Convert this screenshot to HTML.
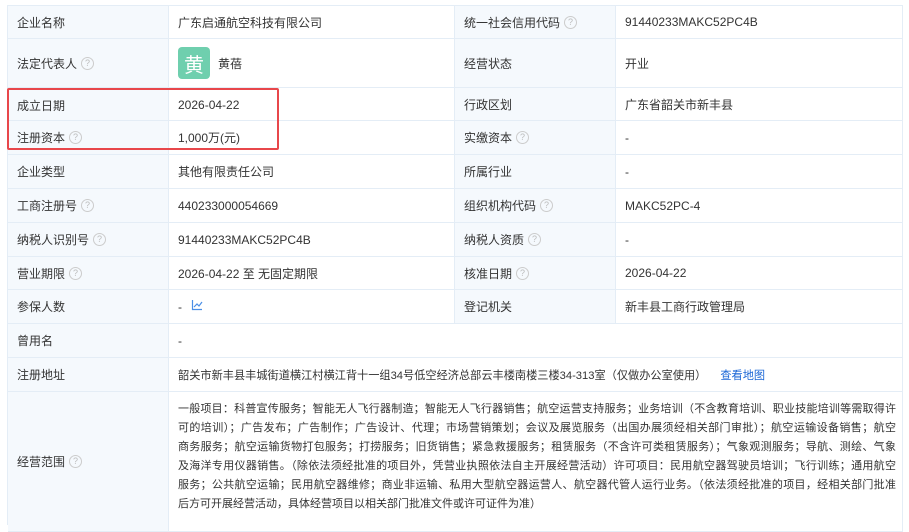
<!DOCTYPE html>
<html><head><meta charset="utf-8"><style>
body{margin:0;background:#fff;width:909px;height:515px;overflow:hidden;font-family:"Liberation Sans","Noto Sans CJK SC",sans-serif;font-size:12px;color:#333;position:relative}
.c{position:absolute;box-sizing:border-box;border-right:1px solid #e4edf6;border-bottom:1px solid #e4edf6;display:flex;align-items:center;padding-left:9px}
.l{background:#f5f9fd}
.q{display:inline-block;width:11px;height:11px;border:1px solid #ccc;border-radius:50%;color:#bbb;font-size:9px;line-height:11px;text-align:center;margin-left:4px}
.av{width:32px;height:32px;border-radius:4px;background:#6fcfae;color:#fff;font-size:20px;display:flex;align-items:center;justify-content:center;margin-right:8px}
.sc div{white-space:nowrap;overflow:hidden;text-align:justify;text-align-last:justify;width:718px;height:19px;line-height:19px;font-size:11px}
.sc div.last{text-align-last:left}
</style></head><body>
<div style="position:absolute;left:7px;top:5px;width:896px;height:1px;background:#e4edf6"></div>
<div style="position:absolute;left:7px;top:5px;width:1px;height:520px;background:#e4edf6"></div>

<div class="c l" style="left:8px;top:6px;width:161px;height:33px">企业名称</div>
<div class="c" style="left:169px;top:6px;width:286px;height:33px">广东启通航空科技有限公司</div>
<div class="c l" style="left:455px;top:6px;width:161px;height:33px">统一社会信用代码<span class="q">?</span></div>
<div class="c" style="left:616px;top:6px;width:287px;height:33px">91440233MAKC52PC4B</div>

<div class="c l" style="left:8px;top:39px;width:161px;height:49px">法定代表人<span class="q">?</span></div>
<div class="c" style="left:169px;top:39px;width:286px;height:49px"><div class="av">黄</div>黄蓓</div>
<div class="c l" style="left:455px;top:39px;width:161px;height:49px">经营状态</div>
<div class="c" style="left:616px;top:39px;width:287px;height:49px">开业</div>

<div class="c l" style="left:8px;top:88px;width:161px;height:33px;padding-top:2px">成立日期</div>
<div class="c" style="left:169px;top:88px;width:286px;height:33px;padding-top:2px">2026-04-22</div>
<div class="c l" style="left:455px;top:88px;width:161px;height:33px">行政区划</div>
<div class="c" style="left:616px;top:88px;width:287px;height:33px">广东省韶关市新丰县</div>

<div class="c l" style="left:8px;top:121px;width:161px;height:34px">注册资本<span class="q">?</span></div>
<div class="c" style="left:169px;top:121px;width:286px;height:34px">1,000万(元)</div>
<div class="c l" style="left:455px;top:121px;width:161px;height:34px">实缴资本<span class="q">?</span></div>
<div class="c" style="left:616px;top:121px;width:287px;height:34px">-</div>

<div class="c l" style="left:8px;top:155px;width:161px;height:34px">企业类型</div>
<div class="c" style="left:169px;top:155px;width:286px;height:34px">其他有限责任公司</div>
<div class="c l" style="left:455px;top:155px;width:161px;height:34px">所属行业</div>
<div class="c" style="left:616px;top:155px;width:287px;height:34px">-</div>

<div class="c l" style="left:8px;top:189px;width:161px;height:34px">工商注册号<span class="q">?</span></div>
<div class="c" style="left:169px;top:189px;width:286px;height:34px">440233000054669</div>
<div class="c l" style="left:455px;top:189px;width:161px;height:34px">组织机构代码<span class="q">?</span></div>
<div class="c" style="left:616px;top:189px;width:287px;height:34px">MAKC52PC-4</div>

<div class="c l" style="left:8px;top:223px;width:161px;height:34px">纳税人识别号<span class="q">?</span></div>
<div class="c" style="left:169px;top:223px;width:286px;height:34px">91440233MAKC52PC4B</div>
<div class="c l" style="left:455px;top:223px;width:161px;height:34px">纳税人资质<span class="q">?</span></div>
<div class="c" style="left:616px;top:223px;width:287px;height:34px">-</div>

<div class="c l" style="left:8px;top:257px;width:161px;height:33px">营业期限<span class="q">?</span></div>
<div class="c" style="left:169px;top:257px;width:286px;height:33px">2026-04-22 至 无固定期限</div>
<div class="c l" style="left:455px;top:257px;width:161px;height:33px">核准日期<span class="q">?</span></div>
<div class="c" style="left:616px;top:257px;width:287px;height:33px">2026-04-22</div>

<div class="c l" style="left:8px;top:290px;width:161px;height:34px">参保人数</div>
<div class="c" style="left:169px;top:290px;width:286px;height:34px">-&nbsp;&nbsp;<svg width="12" height="12" viewBox="0 0 12 12" style="margin-left:2px;margin-top:-4px"><path d="M1.5 1v9.5H11M3 8l3-3 2 2 3-4" fill="none" stroke="#4a8ee6" stroke-width="1.2"/></svg></div>
<div class="c l" style="left:455px;top:290px;width:161px;height:34px">登记机关</div>
<div class="c" style="left:616px;top:290px;width:287px;height:34px">新丰县工商行政管理局</div>

<div class="c l" style="left:8px;top:324px;width:161px;height:34px">曾用名</div>
<div class="c" style="left:169px;top:324px;width:734px;height:34px">-</div>

<div class="c l" style="left:8px;top:358px;width:161px;height:34px">注册地址</div>
<div class="c" style="left:169px;top:358px;width:734px;height:34px;font-size:11.2px;white-space:nowrap">韶关市新丰县丰城街道横江村横江背十一组34号低空经济总部云丰楼南楼三楼34-313室（仅做办公室使用）<span style="color:#1a66d6;margin-left:14px">查看地图</span></div>

<div class="c l" style="left:8px;top:392px;width:161px;height:140px">经营范围<span class="q">?</span></div>
<div class="c sc" style="left:169px;top:392px;width:734px;height:140px;display:block;padding-top:8px">
<div>一般项目：科普宣传服务；智能无人飞行器制造；智能无人飞行器销售；航空运营支持服务；业务培训（不含教育培训、职业技能培训等需取得许</div>
<div>可的培训）；广告发布；广告制作；广告设计、代理；市场营销策划；会议及展览服务（出国办展须经相关部门审批）；航空运输设备销售；航空</div>
<div>商务服务；航空运输货物打包服务；打捞服务；旧货销售；紧急救援服务；租赁服务（不含许可类租赁服务）；气象观测服务；导航、测绘、气象</div>
<div>及海洋专用仪器销售。（除依法须经批准的项目外，凭营业执照依法自主开展经营活动）许可项目：民用航空器驾驶员培训；飞行训练；通用航空</div>
<div>服务；公共航空运输；民用航空器维修；商业非运输、私用大型航空器运营人、航空器代管人运行业务。（依法须经批准的项目，经相关部门批准</div>
<div class="last">后方可开展经营活动，具体经营项目以相关部门批准文件或许可证件为准）</div>
</div>

<div style="position:absolute;left:7px;top:88px;width:272px;height:62px;box-sizing:border-box;border:2px solid #e8474b;border-radius:2px"></div>
</body></html>
